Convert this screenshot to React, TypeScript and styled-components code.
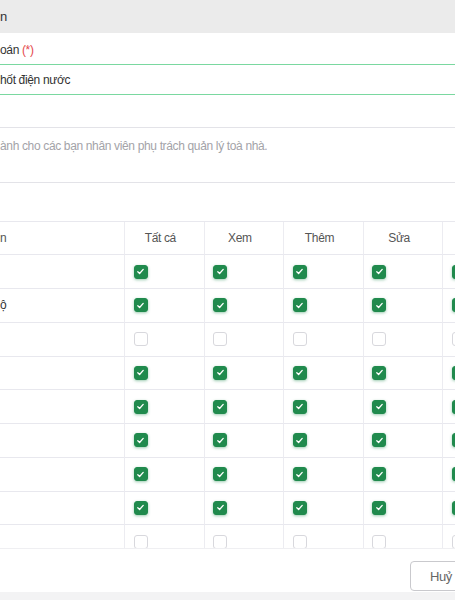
import React from "react";
import styled, { createGlobalStyle } from "styled-components";

const Global = createGlobalStyle`
  html, body { margin: 0; padding: 0; background: #f3f3f4; }
  body {
    font-family: "Liberation Sans", Arial, sans-serif;
    font-size: 12px;
    letter-spacing: -0.35px;
    color: #333;
    overflow: hidden;
  }
`;

const Viewport = styled.div`
  width: 455px;
  height: 600px;
  overflow: hidden;
  background: #f3f3f4;
`;

const Modal = styled.div`
  width: 572px;
  height: 592px;
  background: #fff;
  display: flex;
  flex-direction: column;
`;

const TitleBar = styled.div`
  flex-shrink: 0;
  height: 33px;
  background: #ebebeb;
  display: flex;
  align-items: center;
  font-size: 13px;
  color: #333;
`;

const Body = styled.div`
  flex: 1;
  min-height: 0;
  overflow: hidden;
`;

const Label = styled.label`
  display: block;
  margin-top: 9px;
  line-height: 16px;
  color: #333;
`;

const Required = styled.span`
  color: #e5484d;
`;

const TextInput = styled.input`
  box-sizing: border-box;
  display: block;
  margin: 6px 0 0 -12px;
  width: calc(100% + 12px);
  height: 31px;
  padding: 0 0 0 11px;
  border: 1px solid #7ad8a0;
  outline: none;
  font: inherit;
  letter-spacing: inherit;
  color: #333;
  background: #fff;
`;

const TextArea = styled.textarea`
  box-sizing: border-box;
  display: block;
  margin: 32px 0 0 -12px;
  width: calc(100% + 12px);
  height: 56px;
  padding: 10px 0 0 11px;
  border: 1px solid #e3e3e8;
  outline: none;
  resize: none;
  font: inherit;
  letter-spacing: inherit;
  line-height: 16px;
  background: #fff;
  &::placeholder { color: #a3a3a8; }
`;

const Table = styled.div`
  margin-top: 38px;
  display: grid;
  grid-template-columns: 125px repeat(5, 79.6px);
  grid-template-rows: 33.3px;
  grid-auto-rows: 33.75px;
  border-top: 1px solid #e8e8ee;
`;

const Cell = styled.div<{ $kind: "name" | "head" | "check"; $head?: boolean }>`
  box-sizing: border-box;
  display: flex;
  align-items: center;
  overflow: hidden;
  white-space: nowrap;
  border-right: 1px solid #ececf1;
  border-bottom: 1px solid #e8e8ee;
  color: ${(p) => (p.$head ? "#555" : "#333")};
  justify-content: ${(p) => (p.$kind === "head" ? "center" : "flex-start")};
  padding: ${(p) =>
    p.$kind === "head" ? "0 8px 0 0" : p.$kind === "check" ? "0 0 0 8.5px" : "0"};
`;

const Box = styled.span<{ $checked: boolean }>`
  box-sizing: border-box;
  width: 14px;
  height: 14px;
  border-radius: 3px;
  display: flex;
  align-items: center;
  justify-content: center;
  background: ${(p) => (p.$checked ? "#208a4d" : "#fff")};
  border: 1px solid ${(p) => (p.$checked ? "#208a4d" : "#d8d8dd")};
  box-shadow: ${(p) => (p.$checked ? "0 1px 3px rgba(32,138,77,0.45)" : "none")};
`;

const Footer = styled.div`
  flex-shrink: 0;
  box-sizing: border-box;
  height: 44px;
  border-top: 1px solid #efeff2;
  display: flex;
  justify-content: flex-end;
  align-items: flex-start;
  gap: 8px;
  padding: 12px 16px 0;
`;

const Button = styled.button<{ $primary?: boolean }>`
  box-sizing: border-box;
  height: 30px;
  padding: 0 16px;
  border-radius: 4px;
  font: inherit;
  font-size: 13px;
  letter-spacing: inherit;
  min-width: ${(p) => (p.$primary ? "76px" : "62px")};
  border: 1px solid ${(p) => (p.$primary ? "#208a4d" : "#c9c9cd")};
  background: ${(p) => (p.$primary ? "#208a4d" : "#fff")};
  color: ${(p) => (p.$primary ? "#fff" : "#666")};
`;

const Check = ({ checked }: { checked: boolean }) => (
  <Box $checked={checked}>
    {checked && (
      <svg width="9" height="9" viewBox="0 0 9 9">
        <polyline points="1.8,4.8 3.6,6.5 7.2,2.4" fill="none" stroke="#fff" strokeWidth="1.3" strokeLinecap="round" strokeLinejoin="round" />
      </svg>
    )}
  </Box>
);

const headers = ["Tất cá", "Xem", "Thêm", "Sửa", "Xoá"];
const rows: { name: string; checked: boolean }[] = [
  { name: "", checked: true },
  { name: "ộ", checked: true },
  { name: "", checked: false },
  { name: "", checked: true },
  { name: "", checked: true },
  { name: "", checked: true },
  { name: "", checked: true },
  { name: "", checked: true },
  { name: "", checked: false },
  { name: "", checked: false },
];

export default function App() {
  return (
    <Viewport>
      <Global />
      <Modal>
        <TitleBar>n</TitleBar>
        <Body>
          <Label>
            oán <Required>(*)</Required>
          </Label>
          <TextInput readOnly value="hốt điện nước" />
          <TextArea readOnly placeholder="ành cho các bạn nhân viên phụ trách quản lý toà nhà." />
          <Table>
            <Cell $kind="name" $head>n</Cell>
            {headers.map((h) => (
              <Cell key={h} $kind="head" $head>
                {h}
              </Cell>
            ))}
            {rows.map((r, i) => (
              <React.Fragment key={i}>
                <Cell $kind="name">{r.name}</Cell>
                {headers.map((h) => (
                  <Cell key={h} $kind="check">
                    <Check checked={r.checked} />
                  </Cell>
                ))}
              </React.Fragment>
            ))}
          </Table>
        </Body>
        <Footer>
          <Button>Huỷ</Button>
          <Button $primary>Lưu</Button>
        </Footer>
      </Modal>
    </Viewport>
  );
}
